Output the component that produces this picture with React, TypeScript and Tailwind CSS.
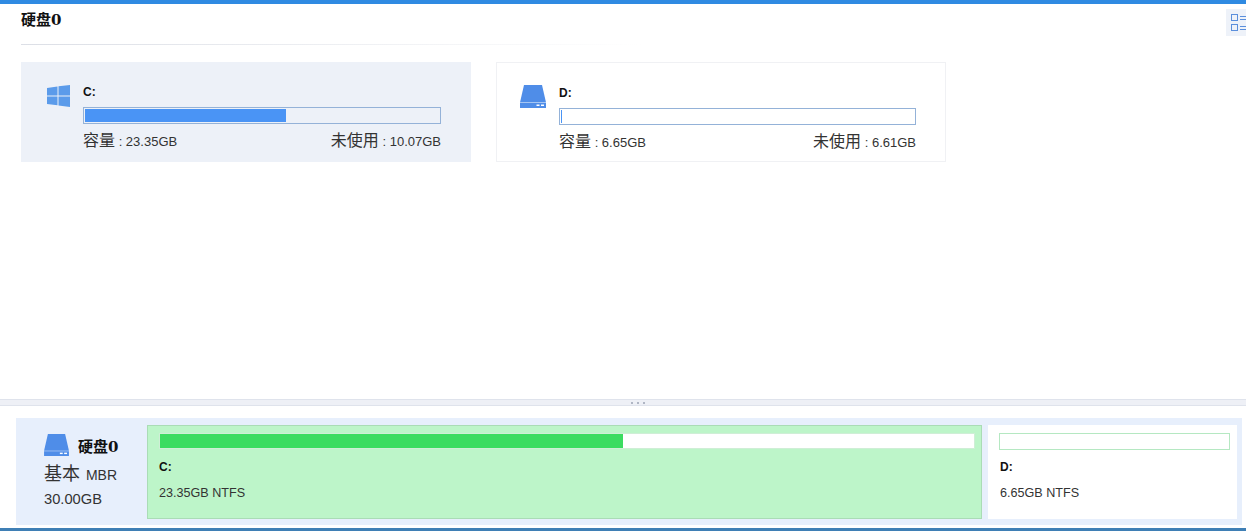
const font = "font-['Liberation_Sans','Noto_Sans_CJK_SC',sans-serif]";
const titleFont = "font-['DejaVu_Serif','Noto_Sans_CJK_SC',serif]";

function DiskIcon({ className }: { className: string }) {
  return (
    <svg viewBox="0 0 26 23" className={className}>
      <path d="M4 0h18l4 17.500H0z" fill="#4f8de8" />
      <rect x="0" y="18" width="26" height="5" fill="#4f8de8" />
      <rect x="16.500" y="19.500" width="3" height="1.500" fill="#fff" />
      <rect x="21" y="19.500" width="3" height="1.500" fill="#fff" />
    </svg>
  );
}

function WinIcon() {
  return (
    <svg viewBox="0 0 23 22" className="w-[23px] h-[22px] mt-[2px]">
      <path d="M0 3l10.500-1.500V10.500H0z" fill="#5b9bea" />
      <path d="M11.500 1.200L23 0v10.500H11.500z" fill="#5b9bea" />
      <path d="M0 11.500h10.500v8.800L0 19z" fill="#5b9bea" />
      <path d="M11.500 11.500H23V22l-11.500-1.500z" fill="#5b9bea" />
    </svg>
  );
}

function VolumeCard({
  name,
  capacity,
  free,
  percent,
  selected,
  icon,
}: {
  name: string;
  capacity: string;
  free: string;
  percent: number;
  selected?: boolean;
  icon: React.ReactNode;
}) {
  return (
    <div
      className={`w-[450px] h-[100px] flex pl-[26px] pt-[21px] ${
        selected ? "bg-[#edf1f8] pr-[30px]" : "bg-white border border-[#f0f1f4] pr-[29px]"
      }`}
    >
      <div className="w-[36px] shrink-0">{icon}</div>
      <div className="flex-1 flex flex-col">
        <div className="h-[24px] text-[12px] leading-[18px] font-bold text-[#111]">{name}</div>
        <div className="h-[17px] border border-[#94b2d8] p-[1px]">
          <div className="h-full bg-[#4a94f5]" style={{ width: `${percent}%` }} />
        </div>
        <div className="flex justify-between items-center mt-[7px] text-[#333] text-[13px] leading-[20px]">
          <span>
            <span className="text-[16px]">容量</span> : {capacity}
          </span>
          <span>
            <span className="text-[16px]">未使用</span> : {free}
          </span>
        </div>
      </div>
    </div>
  );
}

export default function App() {
  return (
    <div className={`w-[1246px] h-[531px] bg-white flex flex-col overflow-hidden ${font}`}>
      <div className="h-[4px] shrink-0 bg-[#2f8ae2]" />

      <div className="flex-1 relative px-[21px]">
        <div className="h-[41px] w-[620px] border-b border-transparent [border-image:linear-gradient(to_right,#dcdfe6,#ffffff)_1] flex items-start pt-[6px]">
          <span className={`text-[15px] leading-[20px] font-bold text-[#111] ${titleFont}`}>硬盘0</span>
        </div>
        <div className="flex gap-[25px] mt-[17px]">
          <VolumeCard
            name="C:"
            capacity="23.35GB"
            free="10.07GB"
            percent={56.7}
            selected
            icon={<WinIcon />}
          />
          <VolumeCard
            name="D:"
            capacity="6.65GB"
            free="6.61GB"
            percent={0.4}
            icon={<DiskIcon className="w-[26px] h-[23px] -ml-[3px] mt-[1px]" />}
          />
        </div>
        <div className="absolute right-0 top-[5px] w-[20px] h-[27px] bg-[#eef2f9] pl-[5px] pt-[5px]">
          <svg viewBox="0 0 15 18" className="w-[15px] h-[18px]">
            <rect x="0.500" y="0.500" width="6" height="6" fill="none" stroke="#5b8fdc" />
            <rect x="0.500" y="10.500" width="6" height="6" fill="none" stroke="#5b8fdc" />
            <path d="M9 2.500h6M9 5.500h6M9 12.500h6M9 15.500h6" stroke="#5b8fdc" />
          </svg>
        </div>
      </div>

      <div className="h-[7px] shrink-0 bg-[#eef0f6] border-y border-[#dfe3ec] flex items-center justify-center gap-[4px] pl-[30px]">
        <span className="w-[2px] h-[2px] bg-[#b0b6c4]" />
        <span className="w-[2px] h-[2px] bg-[#b0b6c4]" />
        <span className="w-[2px] h-[2px] bg-[#b0b6c4]" />
      </div>

      <div className="h-[122px] shrink-0 pt-[12px] pl-[16px] pr-[4px]">
        <div className="h-[107px] bg-[#e7effc] flex pt-[7px] pb-[6px] pr-[5px]">
          <div className="w-[131px] shrink-0 pl-[28px] pt-[8px] text-[#333]">
            <div className="flex items-end gap-[9px] h-[23px]">
              <DiskIcon className="w-[25px] h-[22px]" />
              <span className={`text-[15px] leading-[18px] font-bold text-[#111] ${titleFont}`}>硬盘0</span>
            </div>
            <div className="text-[14px] leading-[24px] mt-[6px]">
              <span className="text-[18px]">基本</span> <span className="ml-[2px]">MBR</span>
            </div>
            <div className="text-[14.700px] leading-[22px] mt-[1px]">30.00GB</div>
          </div>

          <div className="w-[835px] bg-[#bdf5c9] border border-[#aadcb6] pl-[11px] pr-[6px] pt-[7px]">
            <div className="h-[16px] bg-white border border-[#cfeed6] pr-[351px]">
              <div className="h-full bg-[#3bdc60]" />
            </div>
            <div className="text-[12px] leading-[18px] font-bold text-[#111] mt-[9px]">C:</div>
            <div className="text-[12.600px] leading-[18px] text-[#333] mt-[8px]">23.35GB NTFS</div>
          </div>

          <div className="w-[249px] ml-[6px] bg-white pl-[11px] pr-[7px] pt-[8px]">
            <div className="h-[17px] bg-white border border-[#b5e8c2]" />
            <div className="text-[12px] leading-[18px] font-bold text-[#111] mt-[8px] pl-[1px]">D:</div>
            <div className="text-[12.600px] leading-[18px] text-[#333] mt-[8px] pl-[1px]">6.65GB NTFS</div>
          </div>
        </div>
      </div>

      <div className="h-[3px] shrink-0 bg-[#3f7fb5]" />
    </div>
  );
}
